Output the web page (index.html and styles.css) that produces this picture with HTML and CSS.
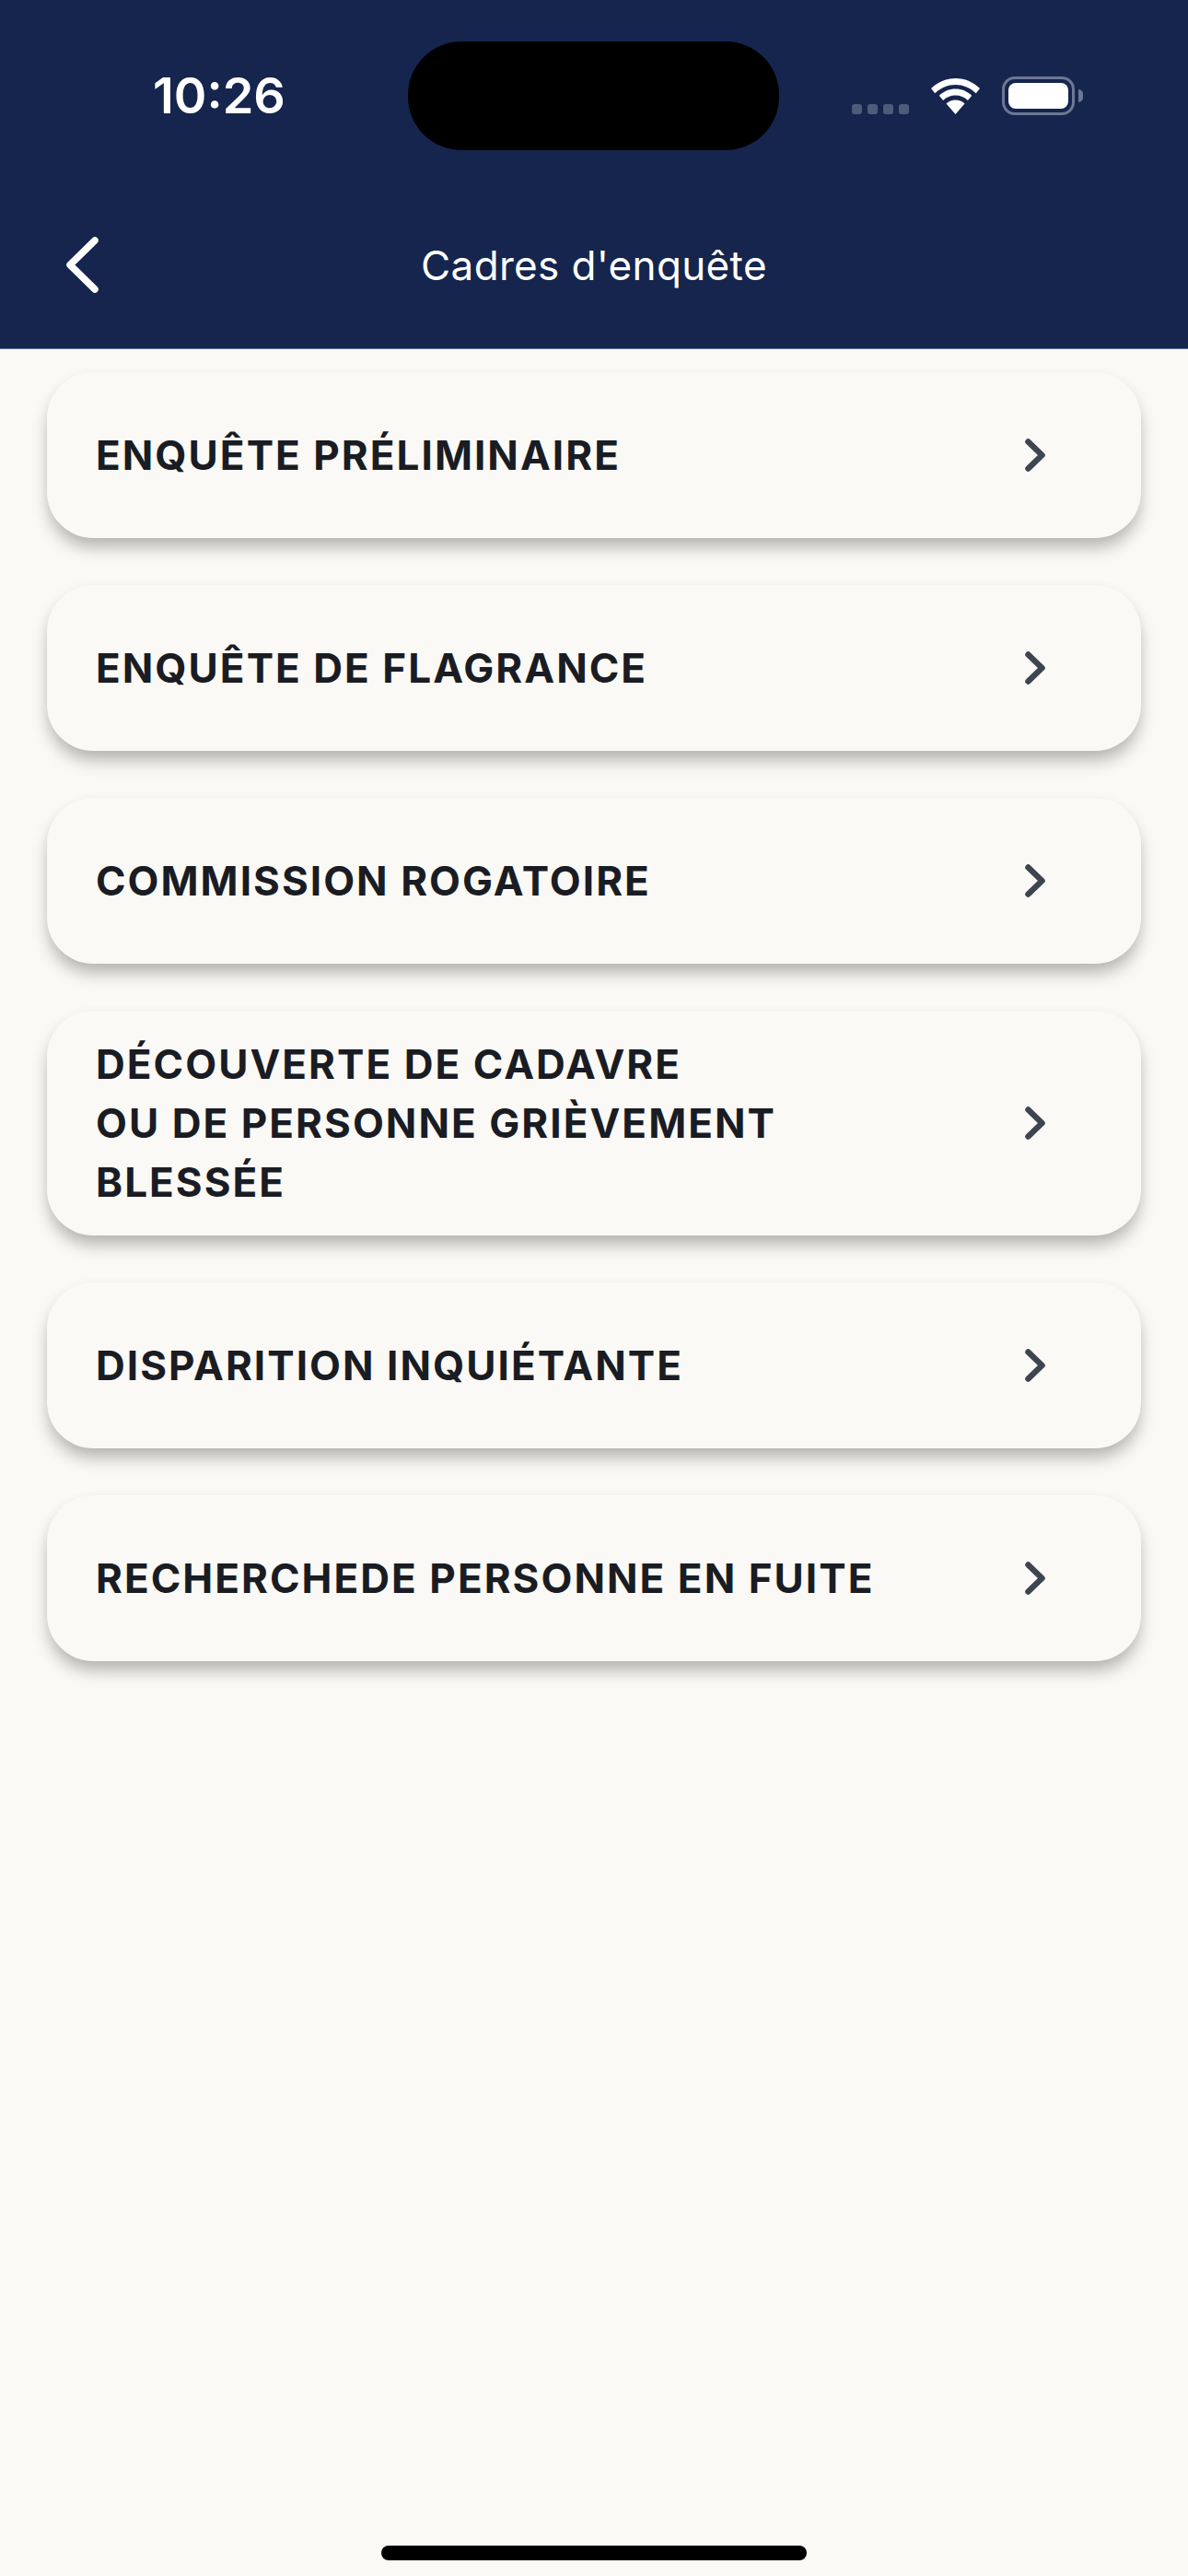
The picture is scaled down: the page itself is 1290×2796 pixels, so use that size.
FILE: index.html
```html
<!DOCTYPE html>
<html lang="fr">
<head>
<meta charset="utf-8">
<title>Cadres d'enquête</title>
<link rel="stylesheet" href="styles.css">
</head>
<body>
<div class="page">
  <header class="header">
    <div class="status">
      <div class="status-left"><span class="time">10:26</span></div>
      <div class="island"></div>
      <div class="status-right">
        <div class="signal"><i></i><i></i><i></i><i></i></div>
        <svg class="wifi" width="53" height="39" viewBox="0 0 53 39">
          <path d="M26.5 0C16.4 0 7.4 3.9 0 11l4.2 5.2C10.4 10.4 18 7 26.5 7s16.100 3.400 22.300 9.200L53 11C45.600 3.900 36.600 0 26.500 0Z" fill="#fff"/>
          <path d="M26.500 11.500c-6.700 0-12.800 2.600-17.700 7.200l4.300 5.200c3.600-3.400 8.200-5.400 13.400-5.400s9.800 2 13.400 5.400l4.300-5.200c-4.900-4.600-11-7.200-17.700-7.200Z" fill="#fff"/>
          <path d="M26.500 23.500c-3.900 0-7.300 1.400-10 4L26.500 39l10-11.500c-2.700-2.600-6.100-4-10-4Z" fill="#fff"/>
        </svg>
        <div class="battery"><div class="battery-fill"></div></div>
        <div class="battery-nub"></div>
      </div>
    </div>
    <div class="nav">
      <svg class="back" width="35" height="61" viewBox="0 0 35 61">
        <path d="M31 4 4 30.500l27 26.500" fill="none" stroke="#fff" stroke-width="7.500" stroke-linecap="round" stroke-linejoin="round"/>
      </svg>
      <h1 class="title">Cadres d'enquête</h1>
      <div class="nav-spacer"></div>
    </div>
  </header>

  <main class="list">
    <a class="card"><span class="label">ENQUÊTE PRÉLIMINAIRE</span><svg class="chev" width="22" height="36" viewBox="0 0 22 36"><path d="M3.500 3.500 18.500 18l-15 14.500" fill="none" stroke="#3f4451" stroke-width="6.500" stroke-linecap="round" stroke-linejoin="round"/></svg></a>
    <a class="card"><span class="label">ENQUÊTE DE FLAGRANCE</span><svg class="chev" width="22" height="36" viewBox="0 0 22 36"><path d="M3.500 3.500 18.500 18l-15 14.500" fill="none" stroke="#3f4451" stroke-width="6.500" stroke-linecap="round" stroke-linejoin="round"/></svg></a>
    <a class="card"><span class="label">COMMISSION ROGATOIRE</span><svg class="chev" width="22" height="36" viewBox="0 0 22 36"><path d="M3.500 3.500 18.500 18l-15 14.500" fill="none" stroke="#3f4451" stroke-width="6.500" stroke-linecap="round" stroke-linejoin="round"/></svg></a>
    <a class="card"><span class="label">DÉCOUVERTE DE CADAVRE<br>OU DE PERSONNE GRIÈVEMENT<br>BLESSÉE</span><svg class="chev" width="22" height="36" viewBox="0 0 22 36"><path d="M3.500 3.500 18.500 18l-15 14.500" fill="none" stroke="#3f4451" stroke-width="6.500" stroke-linecap="round" stroke-linejoin="round"/></svg></a>
    <a class="card"><span class="label">DISPARITION INQUIÉTANTE</span><svg class="chev" width="22" height="36" viewBox="0 0 22 36"><path d="M3.500 3.500 18.500 18l-15 14.500" fill="none" stroke="#3f4451" stroke-width="6.500" stroke-linecap="round" stroke-linejoin="round"/></svg></a>
    <a class="card"><span class="label">RECHERCHEDE PERSONNE EN FUITE</span><svg class="chev" width="22" height="36" viewBox="0 0 22 36"><path d="M3.500 3.500 18.500 18l-15 14.500" fill="none" stroke="#3f4451" stroke-width="6.500" stroke-linecap="round" stroke-linejoin="round"/></svg></a>
  </main>

  <div class="home"><div class="home-bar"></div></div>
</div>
</body>
</html>
```
FILE: styles.css
```css
* { box-sizing: border-box; }
html, body { margin: 0; padding: 0; }
body { background: #faf9f5; font-family: Inter, "Liberation Sans", sans-serif; }
.page { display: flex; flex-direction: column; width: 1290px; height: 2796px; overflow: hidden; }

.header { height: 379px; background: #15254d; border-bottom: 1px solid #5a6a92; flex: none; }
.status { display: flex; height: 163px; padding-top: 45px; }
.status-left { flex: none; width: 443px; padding: 35px 0 0 166px; }
.time { display: block; color: #fff; font-size: 54px; line-height: 48px; font-weight: 600; letter-spacing: 0; }
.island { flex: none; width: 403px; height: 118px; background: #000; border-radius: 58px; }
.status-right { display: flex; align-items: flex-start; padding: 38px 0 0 79px; }
.signal { display: flex; gap: 6px; margin-top: 30px; }
.signal i { display: block; width: 11px; height: 11px; border-radius: 3px; background: rgba(255, 255, 255, .25); }
.wifi { margin: 2px 0 0 24px; }
.battery { width: 79px; height: 42px; margin-left: 24px; padding: 4px; border: 3px solid #6c7793; border-radius: 14px; }
.battery-fill { width: 100%; height: 100%; background: #fff; border-radius: 8px; }
.battery-nub { width: 5px; height: 14px; margin: 14px 0 0 4px; background: #6c7793; border-radius: 0 5px 5px 0; }

.nav { display: grid; grid-template-columns: 1fr auto 1fr; align-items: center; height: 215px; padding: 34px 72px 0; }
.back { display: block; }
.title { margin: 0; color: #fff; font-size: 44px; line-height: 60px; font-weight: 400; letter-spacing: .35px; }
.nav-spacer { height: 1px; }

.list { display: flex; flex-direction: column; gap: 51px; padding: 25px 51px 0; }
.card { display: flex; align-items: center; justify-content: space-between; min-height: 180px; padding: 26px 104px 26px 53px; background: #faf9f5; border-radius: 50px; box-shadow: 0 12px 18px -2px rgba(0, 0, 0, .28), 0 0 14px rgba(0, 0, 0, .02); }
.label { color: #1a1c23; font-size: 44px; line-height: 64px; font-weight: 700; letter-spacing: 2.050px; }
.chev { flex: none; display: block; }

.home { display: flex; justify-content: center; margin-top: auto; padding-bottom: 17px; }
.home-bar { width: 462px; height: 16px; background: #000; border-radius: 8px; }
```
